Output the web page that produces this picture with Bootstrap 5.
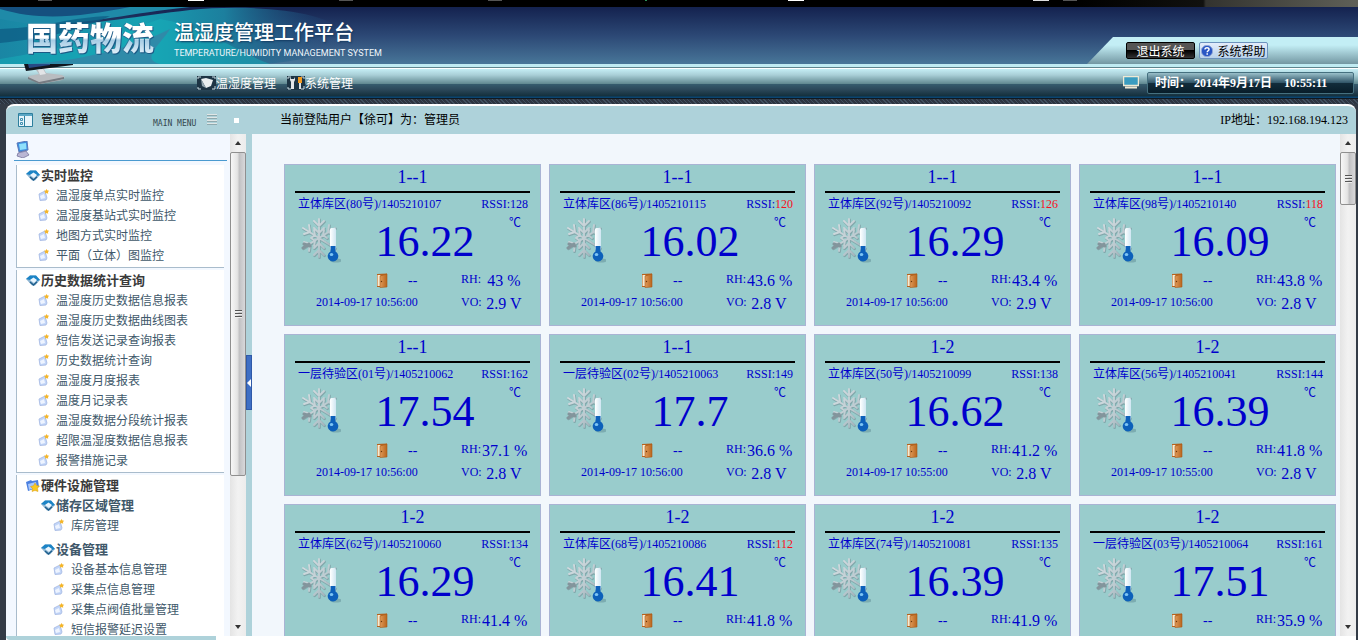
<!DOCTYPE html>
<html lang="zh-CN">
<head>
<meta charset="utf-8">
<meta name="viewport" content="width=device-width, initial-scale=1">
<title>温湿度管理工作平台</title>
<link href="https://cdn.jsdelivr.net/npm/bootstrap@5.3.0/dist/css/bootstrap.min.css" rel="stylesheet">
<style>
:root { --teal:#aed2da; --pale:#f2f7fc; --ink:#0000cc; }
body { background:#333b46; font:12px/20px "Liberation Serif","Noto Sans CJK SC",serif; color:#000; }
a { color:inherit; text-decoration:none; }
svg { display:block; flex:none; }

/* top strip and banner */
.strip { height:7px; background:
  linear-gradient(90deg,transparent 38px,#555 38px 52px,transparent 52px 188px,#fff 188px 204px,transparent 204px 339px,#555 339px 353px,transparent 353px 488px,#555 488px 502px,transparent 502px 645px,#2c8f58 645px 647px,transparent 647px 788px,#fff 788px 804px,transparent 804px 1033px,#ddd 1033px 1049px,transparent 1049px 1063px,#555 1063px 1077px,transparent 1077px) 0 0/100% 1px no-repeat,
  linear-gradient(90deg,#000 79%,#11110f 88.6%,#33332f 88.8%,#5f6058); }
.banner { height:57px; position:relative; overflow:hidden; background:linear-gradient(#14224f,#2c4875 50%,#487699); }
.swirl { position:absolute; inset:0 auto 0 0; }
.brand { position:relative; padding-left:26px; }
.logo-text { font:900 32px/42px "Noto Sans CJK SC",sans-serif; background:linear-gradient(#fff 54%,#a5cce4 58%,#e8f4fc 85%); -webkit-background-clip:text; background-clip:text; color:transparent; filter:drop-shadow(1px 1px 0 #1c5a86) drop-shadow(-1px 0 0 #2a7598); }
.sys-title { font:500 20px/26px "Noto Sans CJK SC",sans-serif; color:#fff; text-shadow:1px 1px 2px #123a60; }
.sys-sub { font:400 9px/16px Roboto,"Open Sans",sans-serif; color:#eef6fb; }
.tools { position:relative; width:271px; height:27px; padding-left:39px; background:linear-gradient(#c3eef5 30%,#7397a2); clip-path:polygon(26px 0,100% 0,100% 100%,0 100%); }
.tool-btn { height:17px; width:69px; border-radius:2px; padding:0; font:12px/15px "Noto Sans CJK SC",sans-serif; }
.btn-exit { border:1px solid #000; color:#fff; background:linear-gradient(#555 45%,#000 50%,#333); }
.btn-help { border:1px solid #6c93bd; color:#000; background:linear-gradient(#e3edfb,#b9d2ea); }

/* navigation bar */
.navband { height:35px; border-top:3px solid #c0ebf2; border-bottom:1px solid #101820;
  background:linear-gradient(#5f858e 1px,#fff 1px 2px,#c5eef5 2px,#a9cfd7 8px,#5f878f 17px,#365c6e 17px,#2a4658 23px,#14303d 29px,#0a4470 30px); position:relative; }
.navband a { color:#fff; font-family:"Noto Sans CJK SC",sans-serif; }
.stand { position:absolute; left:24px; top:-3px; }
.mainnav { padding-left:197px; gap:11px; }
.clock { width:207px; height:22px; border:1px solid #45707f; border-radius:2px; padding-left:7px; color:#fff; font-weight:bold; background:linear-gradient(#9ac0ca,#577c8c 30%,#2f5366 50%,#122c3b 52%,#081d29); white-space:pre; }
.hatch { height:5px; background:repeating-linear-gradient(45deg,#41505f 0 1px,#2d3541 1px 3px); }

/* workspace */
.work { margin:0 2px 0 6px; border-top:2px solid #fff; border-radius:8px 8px 0 0; background:#fff; overflow:hidden; }
.bar { height:28px; background:var(--teal); }
.bar-left { width:274px; padding-left:12px; }
.mini { font:8px/8px "DejaVu Sans Mono",monospace; color:#33474d; margin-left:64px; padding-top:7px; }
.lines { width:10px; height:12px; margin-left:11px; background:repeating-linear-gradient(#dfe6e6 0 1px,#8fa9ae 1px 2px,transparent 2px 3px); }
.dot { width:5px; height:5px; background:#fff; margin-left:17px; }
.side { width:240px; background:#f3f8ff; }
.side-in { padding:0 3px 0 8px; overflow:hidden; font-family:"Noto Sans CJK SC",sans-serif; }
.side-top { height:27px; padding:7px 0 0 1px; border-bottom:1px solid #4a9ad0; margin-bottom:4px; }
.group { margin:0 3px 2px 2px; background:#fff; border-left:1px solid #a9bccc; border-bottom:1px solid #a9bccc; padding-bottom:2px; }
.group a { display:flex; align-items:center; height:20px; color:#40586a; gap:6px; padding-left:21px; white-space:nowrap; }
.group a.head1 { font-weight:bold; font-size:13px; color:#3a3a3a; gap:1px; padding-left:9px; }
.group a.head2 { font-weight:bold; font-size:13px; gap:1px; padding-left:24px; }
.group a.deep { padding-left:36px; }
.split { width:6px; background:var(--teal); }
.handle { width:6px; height:55px; margin-top:221px; padding:0; border:1px solid #2f59a8; background:#3f6fc4; color:#fff; }
.foot { height:4px; }
.foot div { width:210px; background:var(--teal); border-bottom-left-radius:4px; }

.sbar { width:16px; flex:none; background:linear-gradient(90deg,#e4e4e4,#f2f2f2 50%,#ececec); }
.sbar .arrow { height:18px; }
.thumb { border:1px solid #8f8f8f; border-radius:2px; background:linear-gradient(90deg,#f7f7f7,#e4e4e4 45%,#c2c2c4 60%,#d8d8da); }
.thumb-side { height:324px; }
.thumb-main { height:53px; }
.grip { width:7px; height:8px; background:repeating-linear-gradient(#555 0 1px,#eee 1px 2px,transparent 2px 3px); }

/* sensor tiles */
.tiles { background:var(--pale); padding:30px 4px 0 32px; overflow:hidden; }
.tile-grid { display:grid; grid-template-columns:repeat(4,minmax(0,1fr)); gap:8px; }
.tile { height:162px; border:1px solid #a9b4d4; background:#99cccc; color:var(--ink); padding:0 10px; }
.tile-name { font-size:18px; line-height:24px; height:28px; text-align:center; border-bottom:2px solid #000; }
.tile-id { padding:1px 2px 0 3px; white-space:nowrap; height:21px; }
.low { color:#f8101c; }
.reading { height:55px; padding:0 9px 0 6px; }
.temp { font-size:44px; line-height:56px; }
.unit { font-family:"Noto Sans CJK SC",sans-serif; line-height:16px; width:12px; }
.flake { margin-top:2px; }
.info { display:grid; grid-template-columns:145px 1fr; padding:0 0 0 21px; }
.info .lab { width:22px; margin-right:-1px; }
.info .val { font-size:16px; width:44px; text-align:center; white-space:nowrap; padding-top:2px; }
.info > div { height:23px; white-space:nowrap; }
.door { margin-left:60px; }
.dash { font-size:14px; margin-left:20px; }
</style>
</head>
<body class="vh-100 d-flex flex-column overflow-hidden">
<svg width="0" height="0" class="position-absolute" aria-hidden="true">
  <defs>
    <linearGradient id="gs" x1="0" y1="0" x2="1" y2="1"><stop offset="0" stop-color="#d6dfe3"/><stop offset=".6" stop-color="#bccad0"/><stop offset="1" stop-color="#8fa3ad"/></linearGradient>
    <linearGradient id="gd"><stop offset="0" stop-color="#e09a58"/><stop offset="1" stop-color="#b9651c"/></linearGradient>
    <linearGradient id="gt"><stop offset="0" stop-color="#ffffff"/><stop offset="1" stop-color="#cfe6f2"/></linearGradient>
  </defs>
  <symbol id="i-flake" viewBox="0 0 40 48">
    <path d="M18 3v38M2 12l32 20M2 32l32-20M13 5l5 5 5-5M13 12l5 5 5-5M13 39l5-5 5 5M13 32l5-5 5 5M3 18l6-2-1-7M33 18l-6-2 1-7M3 26l6 2-1 7M10 22l4-3-1-5M26 22l-4-3 1-5M10 22l4 3-1 5" fill="none" stroke="#71898f" stroke-width="2.600" opacity=".55" stroke-linecap="round" transform="translate(.6 .8)"/>
    <path d="M18 3v38M2 12l32 20M2 32l32-20M13 5l5 5 5-5M13 12l5 5 5-5M13 39l5-5 5 5M13 32l5-5 5 5M3 18l6-2-1-7M33 18l-6-2 1-7M3 26l6 2-1 7M10 22l4-3-1-5M26 22l-4-3 1-5M10 22l4 3-1 5" fill="none" stroke="url(#gs)" stroke-width="1.900" stroke-linecap="round"/>
    <path d="M2 32l6-4M3 28l6 2" stroke="#83959c" stroke-width="3" stroke-linecap="round"/>
    <ellipse cx="35" cy="44.500" rx="6" ry="2" fill="#6f9ea4" opacity=".7"/>
    <rect x="29" y="12" width="6" height="22" rx="1.500" fill="url(#gt)"/>
    <path d="M29.500 30h5v5.500a5.300 5.300 0 1 1-5 0z" fill="#0c60ba"/>
    <ellipse cx="30.500" cy="38.500" rx="1.800" ry="1.500" fill="#7cc4f4"/>
  </symbol>
  <symbol id="i-door" viewBox="0 0 12 15"><path d="M1 1l10-.5V14H1z" fill="#b7621c"/><path d="M1.500 2h3v11h-3z" fill="#f7ead2"/><path d="M4 3l7-2v13l-7 .6z" fill="url(#gd)" stroke="#a85a18" stroke-width=".6"/><circle cx="5.500" cy="8.500" r=".7" fill="#6b3608"/></symbol>
  <symbol id="i-eye" viewBox="0 0 14 12"><path d="M0 5L4 1.500h6L14 6l-5 5.500H6z" fill="#8fb6d3"/><path d="M0 5l4-3.500h6L14 6l-3 1-3.500-2.500L4 6z" fill="#1c84c6"/><path d="M4 6l3.500-2.500L11 6l-3 3z" fill="#eaf6ff"/><path d="M4 8l3.500 3L11 7.800" stroke="#1f5f8c" fill="none" stroke-width="1.400"/></symbol>
  <symbol id="i-item" viewBox="0 0 12 12"><path d="M1 5l6-3 2 7-1 2-6 .5z" fill="#c3d6f8" stroke="#a3b8e2" stroke-width=".8"/><path d="M2 7l4-2 1 4-4 1z" fill="#eef4ff"/><path d="M8.500 0l1 1.500 1.700.2-1.200 1.300.2 1.700-1.700-.8-1.500.8.2-1.700L6 1.700l1.700-.2z" fill="#f5b62a"/></symbol>
  <symbol id="i-folder" viewBox="0 0 14 13"><path d="M0 3l5-2 1 1 6-1 1 7-11 4z" fill="#4a7fe0"/><path d="M2 5l8-2 1 5-8 3z" fill="#a9c8fb"/><path d="M9 4l1.500 2.500 3 .5-2 2 .5 3.500-3-1-3 1 .5-3-2-2 3-.8z" fill="#f8c820" stroke="#d89a10" stroke-width=".5"/></symbol>
</svg>

<header>
  <div class="strip"></div>
  <div class="banner d-flex justify-content-between">
    <svg class="swirl" width="420" height="57" viewBox="0 0 420 57" aria-hidden="true">
      <defs>
        <linearGradient id="g1"><stop offset="0" stop-color="#1a86a4"/><stop offset=".4" stop-color="#17a0b2"/><stop offset=".65" stop-color="#1c7f9e"/><stop offset="1" stop-color="#24467a" stop-opacity="0"/></linearGradient>
      </defs>
      <path d="M0 8C50 28 110 12 190 3c60-6 140 0 155 24 4 16-50 30-90 30H0z" fill="url(#g1)"/>
      <path d="M0 0h185C110 8 60 24 0 8z" fill="#15507f"/>
      <path d="M0 2c40 12 80 8 130-2h60C110 8 60 26 0 12z" fill="#1f8aa8"/>
      <path d="M0 22C50 20 70 10 110 9 80 24 40 32 0 36z" fill="#0e5c84" opacity=".75"/>
      <path d="M0 52C60 42 110 30 160 12c40 6 80 34 110 45H0z" fill="#16b3bd" opacity=".45"/>
      <path d="M30 57c60-4 110-20 140-35-10 16-30 30-10 35z" fill="#3b7fa4" opacity=".7"/>
    </svg>
    <div class="brand d-flex">
      <div class="logo-text pt-2">国药物流</div>
      <div class="ms-3 ps-1 pt-2 mt-1">
        <div class="sys-title">温湿度管理工作平台</div>
        <div class="sys-sub">TEMPERATURE/HUMIDITY MANAGEMENT SYSTEM</div>
      </div>
    </div>
    <div class="tools mt-auto d-flex gap-1 align-items-center">
      <button type="button" class="tool-btn btn-exit">退出系统</button>
      <button type="button" class="tool-btn btn-help d-flex align-items-center justify-content-center gap-1">
        <svg width="12" height="12" viewBox="0 0 12 12"><circle cx="6" cy="6" r="5.700" fill="#2856c4" stroke="#93a9d8"/><path d="M4 4.500C4 2 8.200 2.200 8 4.500 7.900 5.700 6.200 5.800 6.200 7.200M6.200 8.300v1.500" stroke="#fff" stroke-width="1.500" fill="none"/></svg>系统帮助</button>
    </div>
  </div>
  <div class="navband d-flex justify-content-between align-items-center">
    <svg class="stand" width="52" height="24" viewBox="0 0 52 24" aria-hidden="true">
      <path d="M0 0h49v1L2 7z" fill="#10161e"/><path d="M4 0h22v1L5 4z" fill="#274a86"/>
      <path d="M12 6l8-1 2 4 16 2 3 2-3 3-22 4L4 14l1-2 10-2z" fill="#b9bcc0"/><path d="M4 13l11 5 25-5v2l-24 5L4 15z" fill="#767b82"/><path d="M14 6l5-1 3 5-6 1z" fill="#e2e4e7"/>
    </svg>
    <nav class="mainnav d-flex">
      <a href="#" class="d-flex align-items-center">
        <svg width="19" height="14" viewBox="0 0 19 14"><path d="M0 0h19v14H0z" fill="#1d3444"/><path d="M1 3L1 1h3M15 13h3v-3M1 11v2h3M15 1h3v2" stroke="#c8dbe2" fill="none"/><path d="M4 3l5-1 7 2-2 6-5 2z" fill="#e9eef0"/><path d="M4 3l5 9-4-2z" fill="#93a6b0"/></svg>温湿度管理</a>
      <a href="#" class="d-flex align-items-center">
        <svg width="18" height="14" viewBox="0 0 18 14"><path d="M0 0h18v14H0z" fill="#1d3444"/><path d="M1 3V1h3M14 13h3v-3M1 11v2h3M14 1h3v2" stroke="#c8dbe2" fill="none"/><path d="M3 1v3l1 2v7h3V6l1-2V1L7 3H4z" fill="#e4e6e8"/><path d="M11 1h4v6h-4z" fill="#f09a22"/><path d="M12 7h2v6h-2z" fill="#dfe3e6"/></svg>系统管理</a>
    </nav>
    <div class="d-flex align-items-center gap-1 me-1">
      <svg class="me-1" width="16" height="13" viewBox="0 0 16 13"><path d="M.5.500h15v9H.5z" fill="#3a9cc0" stroke="#eee9d4" stroke-width="1.500"/><path d="M2 11.500h12" stroke="#eee9d4" stroke-width="2"/></svg>
      <div class="clock">时间： 2014年9月17日    10:55:11</div>
    </div>
  </div>
  <div class="hatch"></div>
</header>

<main class="work flex-grow-1 d-flex flex-column">
  <div class="bar d-flex align-items-center flex-shrink-0">
    <div class="bar-left d-flex align-items-center">
      <svg width="15" height="14" viewBox="0 0 15 14"><path d="M.5.500h14v13H.5z" fill="#e6f4fa" stroke="#2d7f9d"/><path d="M1 1h13v2H1z" fill="#5aa6c4"/><path d="M6.500 3v10" stroke="#2d7f9d"/><path d="M2.500 5.500h2v2h-2zM2.500 9.500h2v2h-2z" fill="none" stroke="#3f8fb0"/></svg>
      <span class="ps-2">管理菜单</span>
      <span class="mini">MAIN MENU</span>
      <span class="lines"></span><span class="dot"></span>
    </div>
    <div>当前登陆用户【徐可】为：管理员</div>
    <div class="ms-auto pe-2">IP地址：192.168.194.123</div>
  </div>
  <div class="flex-grow-1 d-flex overflow-hidden">
    <aside class="side d-flex flex-shrink-0">
      <div class="side-in flex-grow-1">
        <div class="side-top">
          <svg width="15" height="17" viewBox="0 0 15 17"><path d="M2 2l10-2 1 9-9 2z" fill="#3c8fe0" stroke="#5a78b8"/><path d="M4 3l7-1 .5 6-6.500 1z" fill="#8fe0fb"/><path d="M3 12l8-2 3 4-6 3-6-2z" fill="#b9b6d4" stroke="#6b6894" stroke-width=".7"/></svg>
        </div>
        <nav id="menu"></nav>
      </div>
      <div class="sbar d-flex flex-column" aria-hidden="true">
        <div class="arrow d-flex align-items-center justify-content-center"><svg width="6" height="4"><path d="M0 4l3-4 3 4z" fill="#333"/></svg></div>
        <div class="thumb thumb-side d-flex align-items-center justify-content-center"><div class="grip"></div></div>
        <div class="arrow mt-auto d-flex align-items-center justify-content-center"><svg width="6" height="4"><path d="M0 0l3 4 3-4z" fill="#333"/></svg></div>
      </div>
    </aside>
    <div class="split flex-shrink-0">
      <button type="button" class="handle d-flex align-items-center justify-content-center" aria-label="收起菜单"><svg width="4" height="8"><path d="M4 0v8L0 4z" fill="#fff"/></svg></button>
    </div>
    <section class="tiles flex-grow-1"><div class="tile-grid" id="tiles"></div></section>
    <div class="sbar d-flex flex-column" aria-hidden="true">
      <div class="arrow d-flex align-items-center justify-content-center"><svg width="6" height="4"><path d="M0 4l3-4 3 4z" fill="#333"/></svg></div>
      <div class="thumb thumb-main d-flex align-items-center justify-content-center"><div class="grip"></div></div>
      <div class="arrow mt-auto d-flex align-items-center justify-content-center"><svg width="6" height="4"><path d="M0 0l3 4 3-4z" fill="#333"/></svg></div>
    </div>
  </div>
  <div class="foot d-flex flex-shrink-0"><div></div></div>
</main>

<script src="https://cdn.jsdelivr.net/npm/bootstrap@5.3.0/dist/js/bootstrap.bundle.min.js"></script>
<script>
// Menu rows: [level class, text]; an empty level is a plain item.
const menu = [
  [['head1','实时监控'],['','温湿度单点实时监控'],['','温湿度基站式实时监控'],['','地图方式实时监控'],['','平面（立体）图监控']],
  [['head1','历史数据统计查询'],['','温湿度历史数据信息报表'],['','温湿度历史数据曲线图表'],['','短信发送记录查询报表'],['','历史数据统计查询'],['','温湿度月度报表'],['','温度月记录表'],['','温湿度数据分段统计报表'],['','超限温湿度数据信息报表'],['','报警措施记录']],
  [['head1 folder','硬件设施管理'],['head2','储存区域管理'],['deep','库房管理'],['head2 mt-1','设备管理'],['deep','设备基本信息管理'],['deep','采集点信息管理'],['deep','采集点阀值批量管理'],['deep','短信报警延迟设置']]
];
const icon = c => c.includes('folder') ? '<svg width="14" height="13"><use href="#i-folder"/></svg>'
  : c.includes('head') ? '<svg width="14" height="12"><use href="#i-eye"/></svg>'
  : '<svg width="12" height="12"><use href="#i-item"/></svg>';
document.getElementById('menu').innerHTML = menu.map(g =>
  `<div class="group">${g.map(([c, t]) => `<a href="#" class="${c}">${icon(c)}${t}</a>`).join('')}</div>`).join('');

// Sensors: group, place, serial, signal, temperature, humidity, then voltage
// and minute of the last report where one has come in.
const rows = [
  ['1--1','立体库区(80号)','1405210107',128,'16.22','43','2.9','56'],
  ['1--1','立体库区(86号)','1405210115',120,'16.02','43.6','2.8','56'],
  ['1--1','立体库区(92号)','1405210092',126,'16.29','43.4','2.9','56'],
  ['1--1','立体库区(98号)','1405210140',118,'16.09','43.8','2.8','56'],
  ['1--1','一层待验区(01号)','1405210062',162,'17.54','37.1','2.8','56'],
  ['1--1','一层待验区(02号)','1405210063',149,'17.7','36.6','2.8','56'],
  ['1-2','立体库区(50号)','1405210099',138,'16.62','41.2','2.8','55'],
  ['1-2','立体库区(56号)','1405210041',144,'16.39','41.8','2.8','55'],
  ['1-2','立体库区(62号)','1405210060',134,'16.29','41.4'],
  ['1-2','立体库区(68号)','1405210086',112,'16.41','41.8'],
  ['1-2','立体库区(74号)','1405210081',135,'16.39','41.9'],
  ['1-2','一层待验区(03号)','1405210064',161,'17.51','35.9']
];
document.getElementById('tiles').innerHTML = rows.map(([g, p, s, r, t, h, v, m]) => `
  <article class="tile">
    <div class="tile-name">${g}</div>
    <div class="tile-id d-flex justify-content-between"><span>${p}/${s}</span><span>RSSI:<span class="${r < 128 ? 'low' : ''}">${r}</span></span></div>
    <div class="reading d-flex justify-content-between">
      <svg class="flake" width="40" height="48"><use href="#i-flake"/></svg>
      <div class="temp">${t}</div><div class="unit">℃</div>
    </div>
    <div class="info">
      <div class="d-flex align-items-center"><svg class="door" width="12" height="15"><use href="#i-door"/></svg><span class="dash">--</span></div>
      <div class="d-flex"><span class="lab">RH:</span><span class="val">${h} %</span></div>
      ${v ? `<div>2014-09-17 10:${m}:00</div>
      <div class="d-flex"><span class="lab">VO:</span><span class="val">${v} V</span></div>` : ''}
    </div>
  </article>`).join('');
</script>
</body>
</html>
